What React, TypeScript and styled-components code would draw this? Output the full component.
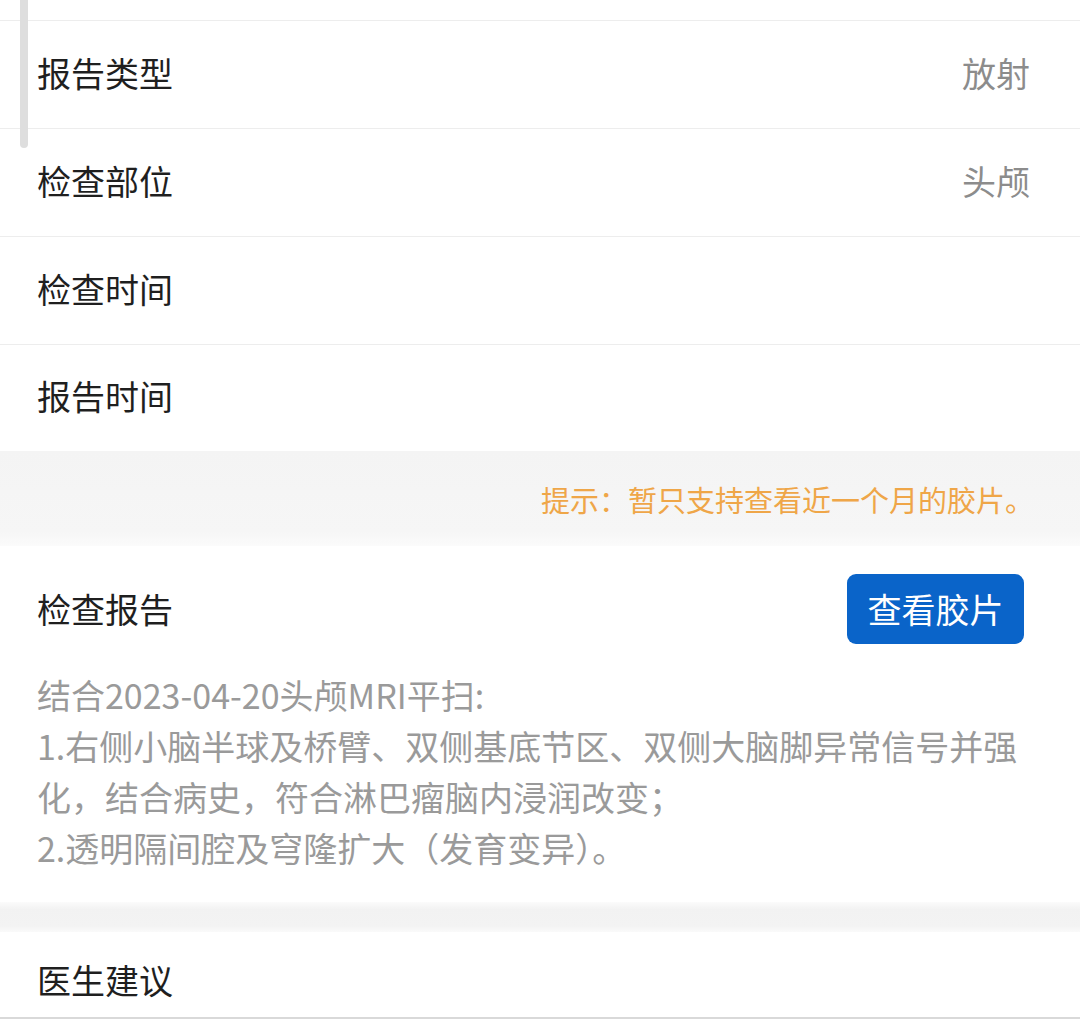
import React from "react";
import styled, { createGlobalStyle } from "styled-components";

const Global = createGlobalStyle`
  html, body { margin: 0; padding: 0; background: #ffffff; }
  body { font-family: "Noto Sans CJK SC", "Noto Sans", sans-serif; }
  * { box-sizing: border-box; }
`;

const Page = styled.div`
  position: relative;
  width: 1080px;
  height: 1021px;
  overflow: hidden;
  background: #ffffff;
  display: flex;
  flex-direction: column;
`;

const ScrollThumb = styled.div`
  position: absolute;
  left: 20px;
  top: -10px;
  width: 8px;
  height: 158px;
  border-radius: 4px;
  background: #dedede;
`;

const Stub = styled.div`
  height: 21px;
  border-bottom: 1px solid #ededed;
`;

const Row = styled.div<{ $last?: boolean }>`
  height: ${(p) => (p.$last ? "106px" : "108px")};
  display: flex;
  align-items: center;
  justify-content: space-between;
  padding: 0 50px 4px 37px;
  border-bottom: ${(p) => (p.$last ? "none" : "1px solid #ededed")};
`;

const Label = styled.span`
  font-size: 34px;
  line-height: 1;
  color: #1f1f1f;
`;

const Value = styled.span`
  font-size: 34px;
  line-height: 1;
  color: #8c8c8c;
`;

const TipBand = styled.div`
  height: 95px;
  background: linear-gradient(#f4f4f4 0%, #f6f6f6 85%, #fbfbfb 100%);
  display: flex;
  align-items: center;
  justify-content: flex-end;
  padding: 2px 46px 0 0;
`;

const Tip = styled.span`
  font-size: 29px;
  line-height: 1;
  color: #efa648;
`;

const ReportSection = styled.div`
  padding: 28px 56px 29px 37px;
  display: flex;
  flex-direction: column;
  gap: 25px;
`;

const ReportHead = styled.div`
  display: flex;
  align-items: center;
  justify-content: space-between;
  height: 70px;
`;

const FilmButton = styled.button`
  width: 177px;
  height: 70px;
  border: none;
  border-radius: 9px;
  background: #0a64c9;
  color: #ffffff;
  font-family: inherit;
  font-size: 34px;
  line-height: 1;
  padding: 0;
`;

const ReportText = styled.div`
  font-size: 34px;
  line-height: 51px;
  color: #9a9a9a;
  margin-right: -18px;
`;

const Gap = styled.div`
  height: 30px;
  background: linear-gradient(#fbfbfb 0%, #f2f2f2 25%, #f3f3f3 80%, #fafafa 100%);
`;

const DoctorRow = styled.div`
  height: 87px;
  display: flex;
  align-items: center;
  padding: 10px 37px 0;
  border-bottom: 2px solid #d9d9d9;
`;

const rows: { label: string; value?: string }[] = [
  { label: "报告类型", value: "放射" },
  { label: "检查部位", value: "头颅" },
  { label: "检查时间" },
  { label: "报告时间" },
];

export default function App() {
  return (
    <>
      <Global />
      <Page>
        <ScrollThumb />
        <Stub />
        {rows.map((r, i) => (
          <Row key={r.label} $last={i === rows.length - 1}>
            <Label>{r.label}</Label>
            {r.value ? <Value>{r.value}</Value> : null}
          </Row>
        ))}
        <TipBand>
          <Tip>提示：暂只支持查看近一个月的胶片。</Tip>
        </TipBand>
        <ReportSection>
          <ReportHead>
            <Label>检查报告</Label>
            <FilmButton>查看胶片</FilmButton>
          </ReportHead>
          <ReportText>
            结合2023-04-20头颅MRI平扫:
            <br />
            1.右侧小脑半球及桥臂、双侧基底节区、双侧大脑脚异常信号并强化，结合病史，符合淋巴瘤脑内浸润改变；
            <br />
            2.透明隔间腔及穹隆扩大（发育变异）。
          </ReportText>
        </ReportSection>
        <Gap />
        <DoctorRow>
          <Label>医生建议</Label>
        </DoctorRow>
      </Page>
    </>
  );
}
